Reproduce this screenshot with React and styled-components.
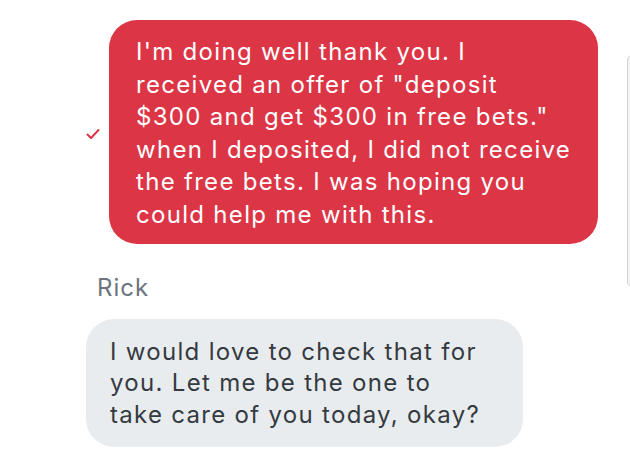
import React from 'react'
import styled, { createGlobalStyle } from 'styled-components'

const GlobalStyle = createGlobalStyle`
  html, body {
    margin: 0;
    padding: 0;
    background: #ffffff;
  }
  body {
    font-family: Inter, "Liberation Sans", Arial, sans-serif;
    overflow: hidden;
  }
`

const Thread = styled.div`
  position: relative;
  width: 630px;
  height: 458px;
  box-sizing: border-box;
  padding: 20px 32px 0 86px;
  display: flex;
  flex-direction: column;
  overflow: hidden;
`

const OutRow = styled.div`
  display: flex;
  align-items: center;
  justify-content: flex-end;
  gap: 9px;
`

const Check = styled.svg`
  width: 14px;
  height: 12px;
  flex-shrink: 0;
  margin-top: 4px;
`

const Bubble = styled.div`
  box-sizing: border-box;
  width: ${props => props.width}px;
  padding: ${props => props.pad};
  border-radius: 28px;
  background: ${props => (props.out ? '#dc3545' : '#e9ecef')};
  color: ${props => (props.out ? '#ffffff' : '#343a40')};
  font-size: 24px;
  line-height: ${props => props.lh}px;
  letter-spacing: 1.3px;
  white-space: nowrap;
`

const InBlock = styled.div`
  display: flex;
  flex-direction: column;
  align-items: flex-start;
  margin-top: 29px;
`

const Name = styled.div`
  font-size: 24px;
  line-height: 30px;
  letter-spacing: 1px;
  color: #6c757d;
  margin-left: 11px;
  margin-bottom: 16px;
`

const Scrollbar = styled.div`
  position: absolute;
  top: 55px;
  left: 627px;
  width: 10px;
  height: 232px;
  box-sizing: border-box;
  border-radius: 5px;
  background: #f3f3f4;
  border: 1px solid #d4d5d8;
`

const App = () => {
  return (
    <>
      <GlobalStyle />
      <Thread>
        <OutRow>
          <Check viewBox="0 0 14 12">
            <path d="M1.5 6.5 L5 10 L12.5 2" fill="none" stroke="#dc3545" strokeWidth="2" strokeLinecap="round" strokeLinejoin="round" />
          </Check>
          <Bubble out width={490} pad="16px 20px 12px 27px" lh={32.6}>
            I'm doing well thank you. I<br />
            received an offer of "deposit<br />
            $300 and get $300 in free bets."<br />
            when I deposited, I did not receive<br />
            the free bets. I was hoping you<br />
            could help me with this.
          </Bubble>
        </OutRow>
        <InBlock>
          <Name>Rick</Name>
          <Bubble width={437} pad="17px 20px 17px 24px" lh={31.5}>
            I would love to check that for<br />
            you. Let me be the one to<br />
            take care of you today, okay?
          </Bubble>
        </InBlock>
        <Scrollbar />
      </Thread>
    </>
  )
}

export default App
